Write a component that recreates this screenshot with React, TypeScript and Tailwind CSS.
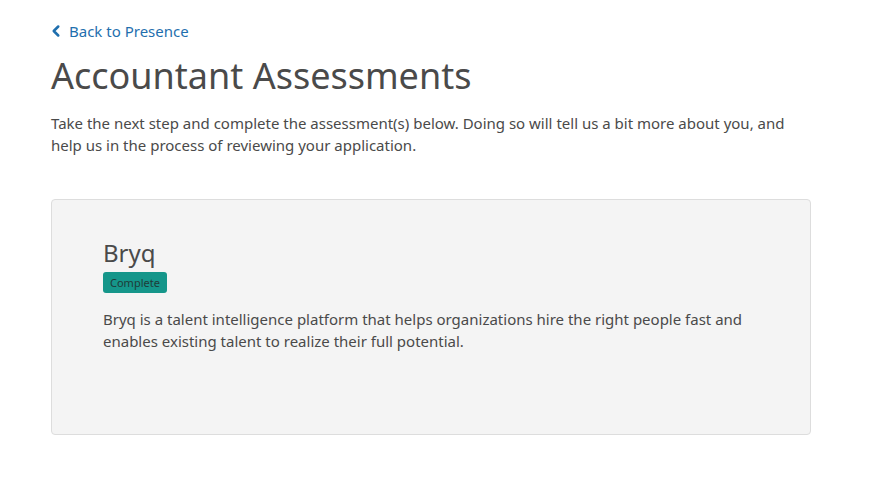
import { ChevronLeft } from 'lucide-react';

export default function App() {
  return (
    <div className="min-h-screen bg-white" style={{ fontFamily: '"Noto Sans", "Open Sans", sans-serif' }}>
      <div className="w-[760px] ml-[51px] pt-[20px]">
        <a href="#" className="flex items-center gap-[4px] text-[15px] leading-[22px] text-[#1f6fae]">
          <ChevronLeft className="w-[18px] h-[18px] -ml-[4px]" strokeWidth={3.4} />
          <span>Back to Presence</span>
        </a>
        <h1 className="mt-[10px] text-[36px] leading-[48px] text-[#4a4a4a] font-normal">Accountant Assessments</h1>
        <p className="mt-[12px] text-[15px] leading-[22px] text-[#4a4a4a] pr-[20px]">
          Take the next step and complete the assessment(s) below. Doing so will tell us a bit more about you, and
          help us in the process of reviewing your application.
        </p>
        <div className="mt-[43px] h-[236px] rounded-[4px] border border-[#dddddd] bg-[#f4f4f4] pl-[51px] pr-[40px] pt-[37px]">
          <h2 className="text-[24px] leading-[32px] text-[#4a4a4a]">Bryq</h2>
          <span className="inline-block mt-[1px] rounded-[3px] bg-[#15968a] px-[7px] text-[11px] leading-[21px] text-[#1f3b38]">
            Complete
          </span>
          <p className="mt-[15px] text-[15px] leading-[22px] text-[#4a4a4a]">
            Bryq is a talent intelligence platform that helps organizations hire the right people fast and enables
            existing talent to realize their full potential.
          </p>
        </div>
      </div>
    </div>
  );
}
